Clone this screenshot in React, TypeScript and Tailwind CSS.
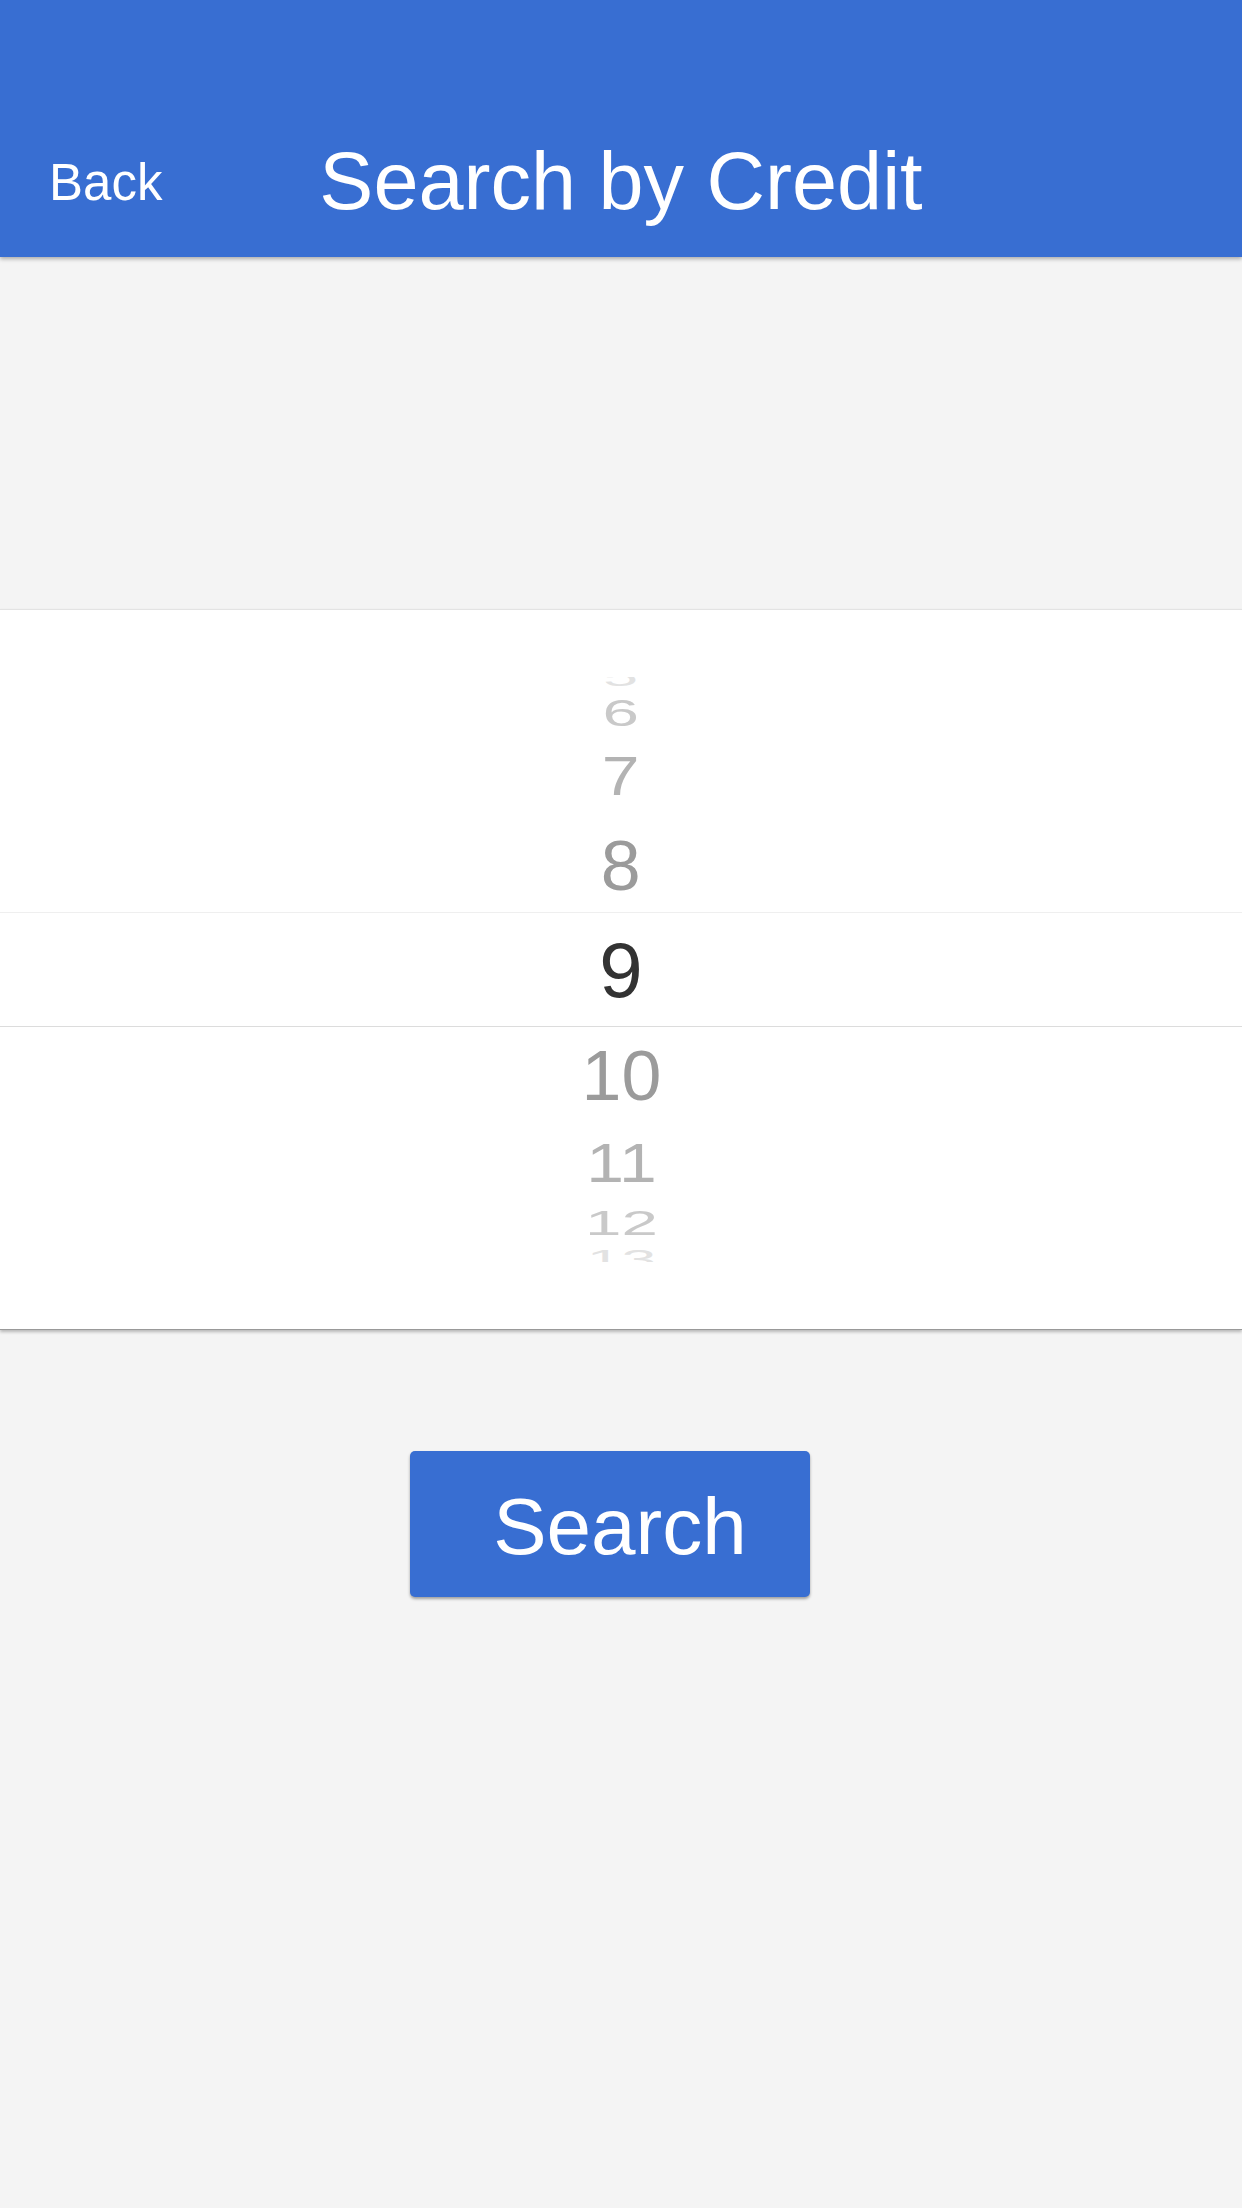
const WHEEL = [
  { n: 5, slot: 'h-[30px] -mt-[15px]', text: 'text-[#e2e2e2] scale-y-[0.32] scale-x-[0.8]' },
  { n: 6, slot: 'h-[41px]', text: 'text-[#c9c9c9] scale-y-[0.48] scale-x-[0.84]' },
  { n: 7, slot: 'h-[85px]', text: 'text-[#b3b3b3] scale-y-[0.7] scale-x-[0.87]' },
  { n: 8, slot: 'h-[94px]', text: 'text-[#9b9b9b] scale-y-[0.91] scale-x-[0.92]' },
  { n: 9, slot: 'h-[115px] border-y border-t-[#efefef] border-b-[#dcdcdc]', text: 'text-[#333333]' },
  { n: 10, slot: 'h-[95px]', text: 'text-[#9b9b9b] scale-y-[0.91] scale-x-[0.92]' },
  { n: 11, slot: 'h-[81px]', text: 'text-[#b3b3b3] scale-y-[0.7] scale-x-[0.87]' },
  { n: 12, slot: 'h-[40px]', text: 'text-[#c9c9c9] scale-y-[0.46] scale-x-[0.84]' },
  { n: 13, slot: 'h-[32px]', text: 'text-[#e2e2e2] scale-y-[0.32] scale-x-[0.8]' },
]

function Header() {
  return (
    <div className="relative z-10 grid h-[257px] grid-cols-[1fr_auto_1fr] items-end bg-[#386ed2] text-white shadow-[0_2px_4px_rgba(0,0,0,0.3)]">
      <div className="mb-[49px] pl-[49px] text-[51px] leading-none">Back</div>
      <div className="mb-[35px] text-[81px] leading-none">Search by Credit</div>
      <div />
    </div>
  )
}

function CreditPicker() {
  return (
    <div className="mt-[352px] border-t border-b border-t-[#e3e3e3] border-b-[#999999] bg-white py-[67px] shadow-[0_2px_3px_rgba(0,0,0,0.25)]">
      {/* wheel viewport */}
      <div className="flex h-[585px] flex-col overflow-hidden">
        {WHEEL.map((item) => (
          <div key={item.n} className={`flex shrink-0 items-center justify-center ${item.slot}`}>
            <span className={`block text-[78px] leading-none ${item.text}`}>{item.n}</span>
          </div>
        ))}
      </div>
    </div>
  )
}

export default function App() {
  return (
    <div className="min-h-[2208px] w-full bg-[#f4f4f4] font-['Liberation_Sans',Arial,sans-serif]">
      <Header />
      <CreditPicker />
      <div className="mt-[121px] flex justify-center pr-[22px]">
        <button className="flex h-[146px] w-[400px] items-center justify-center rounded-[5px] bg-[#386ed2] pl-[20px] pt-[6px] text-[80px] leading-none text-white shadow-[0_2px_3px_rgba(0,0,0,0.35)]">
          Search
        </button>
      </div>
    </div>
  )
}
